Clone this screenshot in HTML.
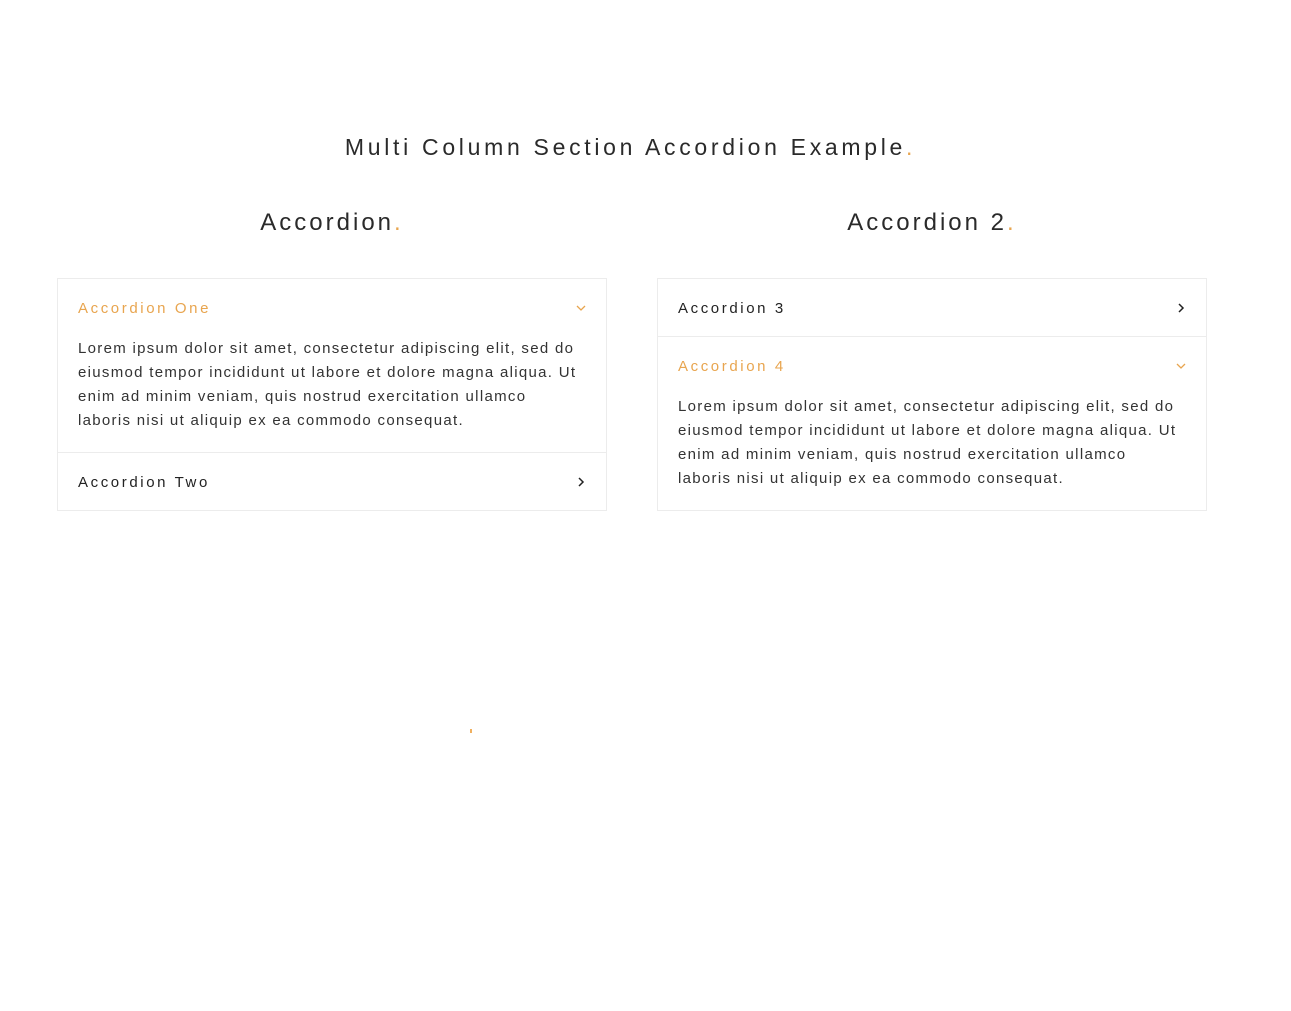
<!DOCTYPE html>
<html><head><meta charset="utf-8"><style>
body{margin:0;background:#fff;font-family:"Liberation Sans",sans-serif;color:#2b2b2b;width:1291px;height:1011px;position:relative;overflow:hidden}
.t{position:absolute;left:0;width:1261px;text-align:center;top:134px;font-size:23px;letter-spacing:3.7px;color:#2a2a2a}
.h{position:absolute;top:209px;font-size:24px;letter-spacing:3px;text-align:center;width:550px;color:#2a2a2a}
.dot{color:#e8a54f}
.box{position:absolute;top:278px;width:548px;border:1px solid #ececec}
.hd{height:57px;position:relative;font-size:15px;letter-spacing:2.6px;line-height:59px;padding-left:20px;color:#222}
.hd.o{color:#e8a54f}
.bd{padding:0 20px 19px;font-size:15px;line-height:24px;letter-spacing:1.3px;color:#333;white-space:nowrap;margin-top:1px}
.sep{border-top:1px solid #ececec}
.ic{position:absolute;right:20px;top:24px}
</style></head><body>
<div class="t">Multi Column Section Accordion Example<span class="dot">.</span></div>
<div class="h" style="left:57px">Accordion<span class="dot">.</span></div>
<div class="h" style="left:657px">Accordion 2<span class="dot">.</span></div>
<div class="box" style="left:57px">
<div class="hd o">Accordion One<svg class="ic" width="10" height="10" viewBox="0 0 10 10"><path d="M1 3l4 4 4-4" fill="none" stroke="#e8a54f" stroke-width="1.3"/></svg></div>
<div class="bd">Lorem ipsum dolor sit amet, consectetur adipiscing elit, sed do<br>eiusmod tempor incididunt ut labore et dolore magna aliqua. Ut<br>enim ad minim veniam, quis nostrud exercitation ullamco<br>laboris nisi ut aliquip ex ea commodo consequat.</div>
<div class="hd sep">Accordion Two<svg class="ic" width="10" height="10" viewBox="0 0 10 10"><path d="M3 1l4 4-4 4" fill="none" stroke="#222" stroke-width="1.5"/></svg></div>
</div>
<div class="box" style="left:657px">
<div class="hd">Accordion 3<svg class="ic" width="10" height="10" viewBox="0 0 10 10"><path d="M3 1l4 4-4 4" fill="none" stroke="#222" stroke-width="1.5"/></svg></div>
<div class="hd o sep">Accordion 4<svg class="ic" width="10" height="10" viewBox="0 0 10 10"><path d="M1 3l4 4 4-4" fill="none" stroke="#e8a54f" stroke-width="1.3"/></svg></div>
<div class="bd">Lorem ipsum dolor sit amet, consectetur adipiscing elit, sed do<br>eiusmod tempor incididunt ut labore et dolore magna aliqua. Ut<br>enim ad minim veniam, quis nostrud exercitation ullamco<br>laboris nisi ut aliquip ex ea commodo consequat.</div>
</div>
<div style="position:absolute;left:470px;top:729px;width:2px;height:4px;background:#f0b060"></div>
</body></html>
